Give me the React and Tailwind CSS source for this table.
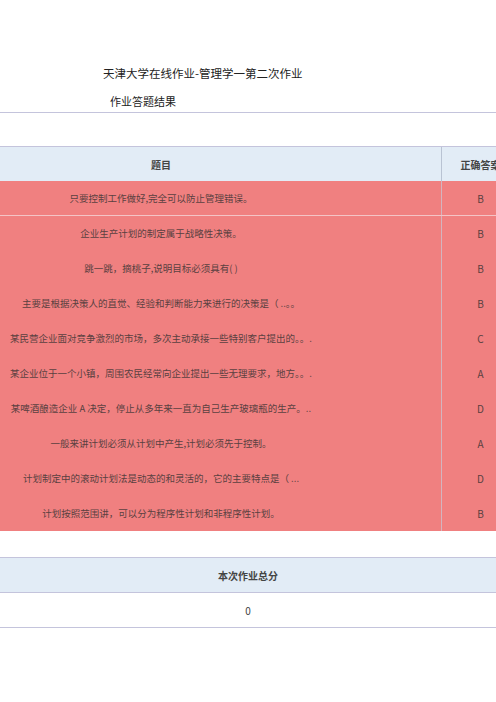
import React from 'react';

const rows = [
  { q: '只要控制工作做好,完全可以防止管理错误。', a: 'B' },
  { q: '企业生产计划的制定属于战略性决策。', a: 'B' },
  { q: '跳一跳，摘桃子,说明目标必须具有(   )', a: 'B' },
  { q: '主要是根据决策人的直觉、经验和判断能力来进行的决策是（ ..。。', a: 'B' },
  { q: '某民营企业面对竞争激烈的市场，多次主动承接一些特别客户提出的。。.', a: 'C' },
  { q: '某企业位于一个小镇，周围农民经常向企业提出一些无理要求，地方。。.', a: 'A' },
  { q: '某啤酒酿造企业 A 决定，停止从多年来一直为自己生产玻璃瓶的生产。..', a: 'D' },
  { q: '一般来讲计划必须从计划中产生,计划必须先于控制。', a: 'A' },
  { q: '计划制定中的滚动计划法是动态的和灵活的，它的主要特点是（   ...', a: 'D' },
  { q: '计划按照范围讲，可以分为程序性计划和非程序性计划。', a: 'B' },
];

export default function App() {
  return (
    <div
      className="w-[496px] h-[702px] bg-white overflow-hidden text-[#333]"
      style={{ fontFamily: '"Noto Sans CJK SC", "Noto Sans", sans-serif' }}
    >
      {/* Title block */}
      <div className="pt-[65px]">
        <div className="ml-[103px] text-[11.5px] leading-[16px] text-[#222]">
          天津大学在线作业-管理学一第二次作业
        </div>
        <div className="ml-[110px] mt-[12px] text-[11px] leading-[16px] text-[#222]">
          作业答题结果
        </div>
      </div>

      <div className="mt-[3px] border-t border-[#c4c4dc] h-[34px]"></div>

      {/* Answers table */}
      <div className="-ml-[119px] w-[638px]">
        <div className="grid grid-cols-[560px_78px] h-[35px] bg-[#e2ecf6] border-t border-[#c4c4dc]">
          <div className="flex items-center justify-center text-[10px] font-semibold text-[#444]">题目</div>
          <div className="flex items-center justify-center border-l border-[#b9c3d3] text-[10px] font-semibold text-[#444]">
            正确答案
          </div>
        </div>
        {rows.map((r, i) => (
          <div
            key={i}
            className={`grid grid-cols-[560px_78px] h-[35px] bg-[#f08080] ${
              i === 0 ? 'border-b border-[#f4c4c6]' : ''
            }`}
          >
            <div className="flex items-center justify-center text-[9.5px] text-[#5a4040] whitespace-nowrap">
              {r.q}
            </div>
            <div className="flex items-center justify-center border-l border-[#d4b4be] text-[10px] text-[#5a4040]">
              {r.a}
            </div>
          </div>
        ))}
      </div>

      {/* Score table */}
      <div className="mt-[26px]">
        <div className="h-[36px] bg-[#e2ecf6] border-y border-[#c4c4dc] flex items-center justify-center text-[10px] font-semibold text-[#444]">
          本次作业总分
        </div>
        <div className="h-[35px] border-b border-[#c4c4dc] flex items-center justify-center text-[10px] text-[#444]">
          0
        </div>
      </div>
    </div>
  );
}
